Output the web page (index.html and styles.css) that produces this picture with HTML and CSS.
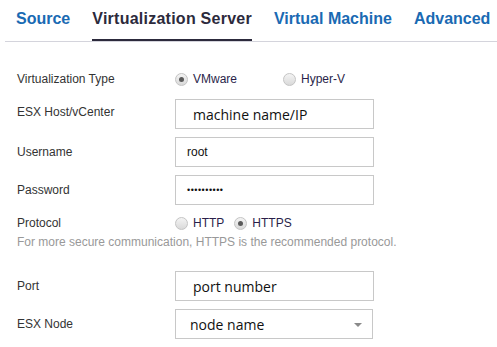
FILE: index.html
```html
<!DOCTYPE html>
<html>
<head>
<meta charset="utf-8">
<link rel="stylesheet" href="styles.css">
</head>
<body>
<div class="tabs">
  <div class="tab">Source</div>
  <div class="tab active">Virtualization Server</div>
  <div class="tab">Virtual Machine</div>
  <div class="tab">Advanced</div>
</div>
<div class="form">
  <div class="row row-radio first">
    <div class="label">Virtualization Type</div>
    <div class="control">
      <span class="opt wide"><span class="radio checked"></span>VMware</span>
      <span class="opt"><span class="radio"></span>Hyper-V</span>
    </div>
  </div>
  <div class="row row-input">
    <div class="label up">ESX Host/vCenter</div>
    <div class="control"><div class="field big">machine name/IP</div></div>
  </div>
  <div class="row row-input">
    <div class="label">Username</div>
    <div class="control"><div class="field small">root</div></div>
  </div>
  <div class="row row-input">
    <div class="label">Password</div>
    <div class="control"><div class="field small dots">••••••••••</div></div>
  </div>
  <div class="row row-proto">
    <div class="label">Protocol</div>
    <div class="control">
      <span class="opt gap"><span class="radio"></span>HTTP</span>
      <span class="opt"><span class="radio checked"></span>HTTPS</span>
    </div>
  </div>
  <div class="hint">For more secure communication, HTTPS is the recommended protocol.</div>
  <div class="row row-input">
    <div class="label">Port</div>
    <div class="control"><div class="field big">port number</div></div>
  </div>
  <div class="row row-input">
    <div class="label">ESX Node</div>
    <div class="control"><div class="field big select">node name<span class="arrow"></span></div></div>
  </div>
</div>
</body>
</html>
```

FILE: styles.css
```css
html, body {
  margin: 0;
  padding: 0;
  background: #fff;
}
body {
  font-family: "Liberation Sans", Arial, sans-serif;
  color: #333;
  width: 497px;
  height: 347px;
  overflow: hidden;
}
.tabs {
  display: flex;
  margin-left: 5px;
  border-bottom: 1px solid #d4d4dc;
  padding-top: 10px;
}
.tab {
  font-size: 16px;
  font-weight: bold;
  line-height: 18px;
  color: #1a6ab3;
  margin: 0 11px;
  padding-bottom: 11px;
  border-bottom: 2px solid transparent;
  white-space: nowrap;
}
.tab.active {
  color: #2c2a3c;
  letter-spacing: 0.25px;
  border-bottom-color: #2c2a3c;
}
.form {
  padding-left: 17px;
  padding-top: 24px;
  font-size: 12px;
}
.row {
  display: flex;
  align-items: center;
}
.label {
  width: 158px;
  flex: none;
  color: #333;
}
.label.up {
  position: relative;
  top: -2px;
}
.row-radio {
  height: 26px;
  margin-bottom: 7px;
}
.row-input {
  height: 30px;
  margin-bottom: 8px;
}
.row-proto {
  height: 20px;
}
.hint {
  height: 18px;
  line-height: 18px;
  color: #999;
  margin-bottom: 20px;
}
.control {
  display: flex;
  align-items: center;
}
.opt {
  display: inline-flex;
  align-items: center;
  color: #2a1f4a;
}
.opt.wide {
  width: 108px;
}
.opt.gap {
  margin-right: 10px;
}
.radio {
  width: 11px;
  height: 11px;
  border-radius: 50%;
  border: 1px solid #c4c4c4;
  background: linear-gradient(#f4f4f4, #d9d9d9);
  margin-right: 5px;
  position: relative;
  flex: none;
}
.radio.checked::after {
  content: "";
  position: absolute;
  left: 3px;
  top: 3px;
  width: 5px;
  height: 5px;
  border-radius: 50%;
  background: #5a5a5a;
}
.field {
  box-sizing: border-box;
  width: 199px;
  height: 30px;
  border: 1px solid #c8c8c8;
  display: flex;
  align-items: center;
  color: #111;
  position: relative;
}
.field.big {
  font-family: "Open Sans", "Noto Sans", sans-serif;
  font-size: 14px;
  padding-left: 17px;
}
.field.small {
  font-size: 12px;
  padding-left: 11px;
}
.field.dots {
  font-size: 9px;
  letter-spacing: 0.5px;
}
.field.select {
  width: 198px;
  padding-left: 14px;
}
.arrow {
  position: absolute;
  right: 10px;
  top: 13px;
  width: 0;
  height: 0;
  border-left: 4px solid transparent;
  border-right: 4px solid transparent;
  border-top: 4px solid #8a8a8a;
}
```
